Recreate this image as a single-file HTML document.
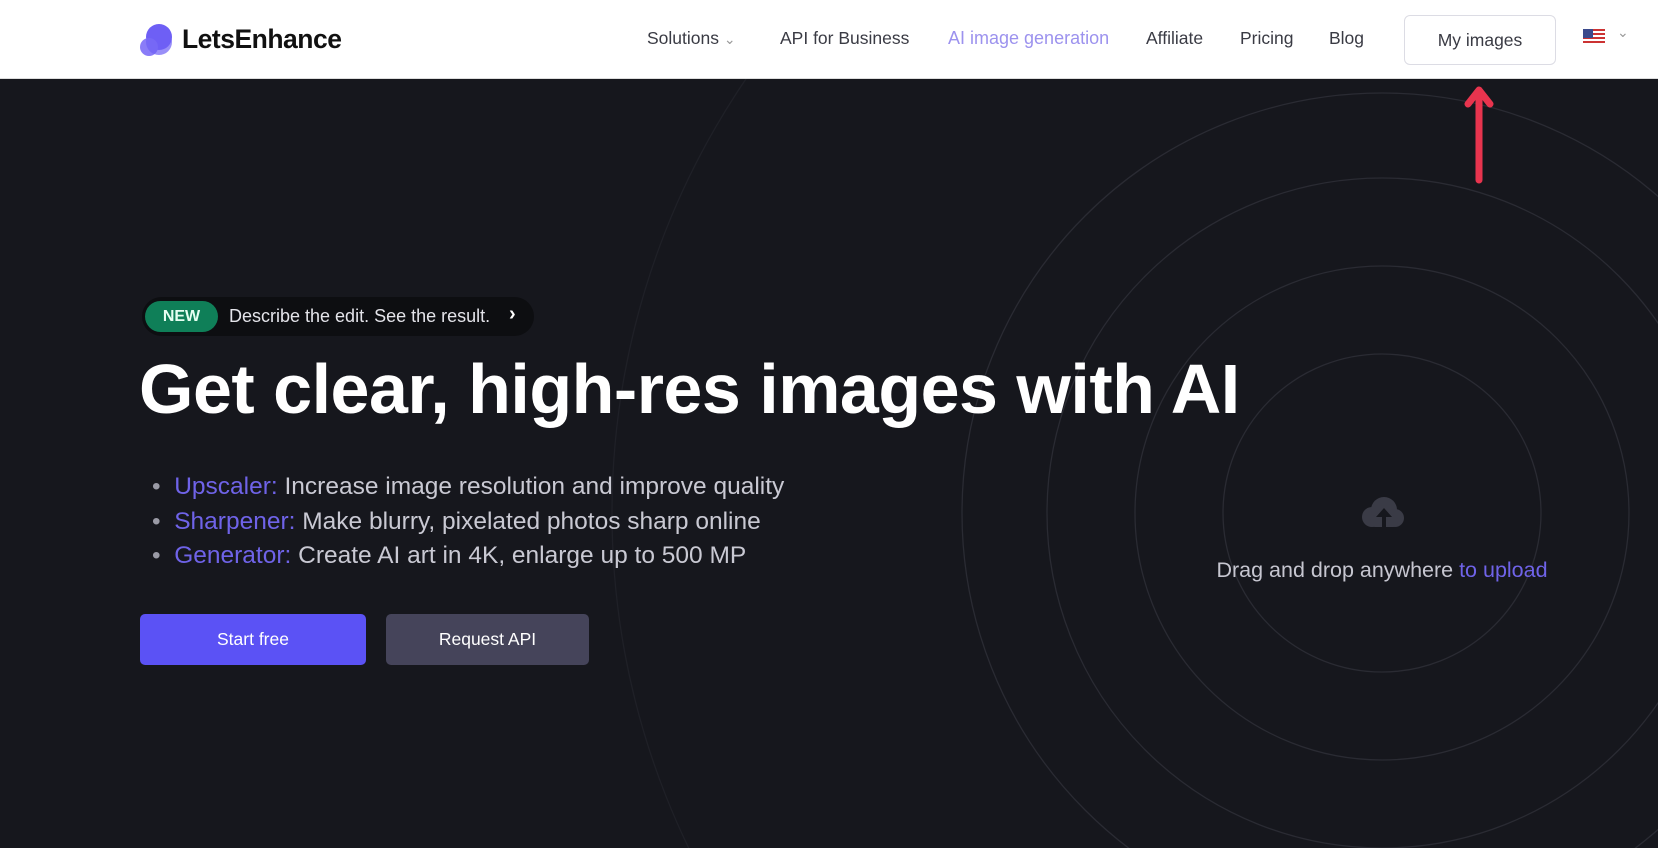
<!DOCTYPE html>
<html><head><meta charset="utf-8"><style>
*{margin:0;padding:0;box-sizing:border-box}
html,body{width:1658px;height:848px;overflow:hidden}
body{background:#16171d;font-family:"Liberation Sans",sans-serif;position:relative}
.hdr{position:absolute;left:0;top:0;width:1658px;height:79px;background:#fff;border-bottom:1px solid #ddd}
.nav{position:absolute;top:28px;font-size:17.5px;color:#3a3b44}
.abs{position:absolute}
</style></head><body>
<svg class="abs" style="left:0;top:79px" width="1658" height="769">
<g fill="none" stroke="#2a2b33" stroke-width="1.3">
<circle cx="1382" cy="434" r="159"/>
<circle cx="1382" cy="434" r="247"/>
<circle cx="1382" cy="434" r="335"/>
<circle cx="1382" cy="434" r="420"/>
<circle cx="1382" cy="434" r="770" stroke="#1f2027"/>
</g>
<g transform="translate(1358,418)" fill="#3a3b46">
<circle cx="14" cy="20" r="10"/><circle cx="26" cy="13" r="13"/><circle cx="37" cy="21" r="9"/><rect x="12" y="18" width="28" height="12" rx="5"/>
<path d="M24 30 V20 h-6 l8-9 8 9 h-6 v10z" fill="#16171d"/>
</g>
</svg>
<div class="hdr">
<svg class="abs" style="left:139px;top:22px" width="34" height="36"><circle cx="20" cy="15" r="13" fill="#6e5ff5"/><circle cx="10" cy="25" r="9" fill="#8a7cf8"/><circle cx="20" cy="20" r="13" fill="#6e5ff5" opacity=".7"/></svg>
<div class="abs" style="left:182px;top:24px;font-size:26.5px;font-weight:bold;color:#111;letter-spacing:-0.5px">LetsEnhance</div>
<div class="nav" style="left:647px">Solutions <span style="color:#999;font-size:14px">&#8964;</span></div>
<div class="nav" style="left:780px">API for Business</div>
<div class="nav" style="left:948px;color:#9c92ee;font-size:18px">AI image generation</div>
<div class="nav" style="left:1146px">Affiliate</div>
<div class="nav" style="left:1240px">Pricing</div>
<div class="nav" style="left:1329px">Blog</div>
<div class="abs" style="left:1404px;top:15px;width:152px;height:50px;border:1px solid #dcdce4;border-radius:6px;font-size:17.5px;color:#3a3b44;text-align:center;line-height:48px">My images</div>
<div class="abs" style="left:1583px;top:29px;width:22px;height:16px;background:repeating-linear-gradient(#c33 0 2px,#fff 2px 4px)"><div style="width:10px;height:9px;background:#3b4a8c"></div></div>
<div class="abs" style="left:1617px;top:24px;color:#999;font-size:14px">&#8964;</div>
</div>
<svg class="abs" style="left:1464px;top:84px" width="30" height="100"><path d="M15 96 V8 M4 20 L15 6 L26 20" stroke="#e8344e" stroke-width="7" fill="none" stroke-linecap="round" stroke-linejoin="round"/></svg>
<div class="abs" style="left:142px;top:297px;width:392px;height:39px;border-radius:20px;background:#0d0e11"></div>
<div class="abs" style="left:145px;top:301px;width:73px;height:31px;border-radius:16px;background:#0f7f58;color:#e6fff2;font-size:16px;font-weight:bold;text-align:center;line-height:31px">NEW</div>
<div class="abs" style="left:229px;top:306px;font-size:18px;color:#e4e4ea">Describe the edit. See the result.</div>
<div class="abs" style="left:509px;top:303px;font-size:20px;color:#fff;font-weight:bold">&#8250;</div>
<div class="abs" style="left:139px;top:349px;font-size:70px;font-weight:bold;color:#fff;letter-spacing:-0.5px;white-space:nowrap">Get clear, high-res images with AI</div>
<div class="abs" style="left:152px;top:470px;font-size:24.5px;line-height:34.5px;color:#c9c9d3;white-space:nowrap">
<div><span style="color:#9a9aa5">•</span>&nbsp; <span style="color:#6f63e8">Upscaler:</span> Increase image resolution and improve quality</div>
<div><span style="color:#9a9aa5">•</span>&nbsp; <span style="color:#6f63e8">Sharpener:</span> Make blurry, pixelated photos sharp online</div>
<div><span style="color:#9a9aa5">•</span>&nbsp; <span style="color:#6f63e8">Generator:</span> Create AI art in 4K, enlarge up to 500 MP</div>
</div>
<div class="abs" style="left:140px;top:614px;width:226px;height:51px;border-radius:5px;background:#5b52f5;color:#fff;font-size:17.5px;text-align:center;line-height:51px">Start free</div>
<div class="abs" style="left:386px;top:614px;width:203px;height:51px;border-radius:5px;background:#45445a;color:#fff;font-size:17.5px;text-align:center;line-height:51px">Request API</div>
<div class="abs" style="left:1132px;top:558px;width:500px;text-align:center;font-size:21.5px;color:#c6c6d0">Drag and drop anywhere <span style="color:#6f63e8">to upload</span></div>
</body></html>
